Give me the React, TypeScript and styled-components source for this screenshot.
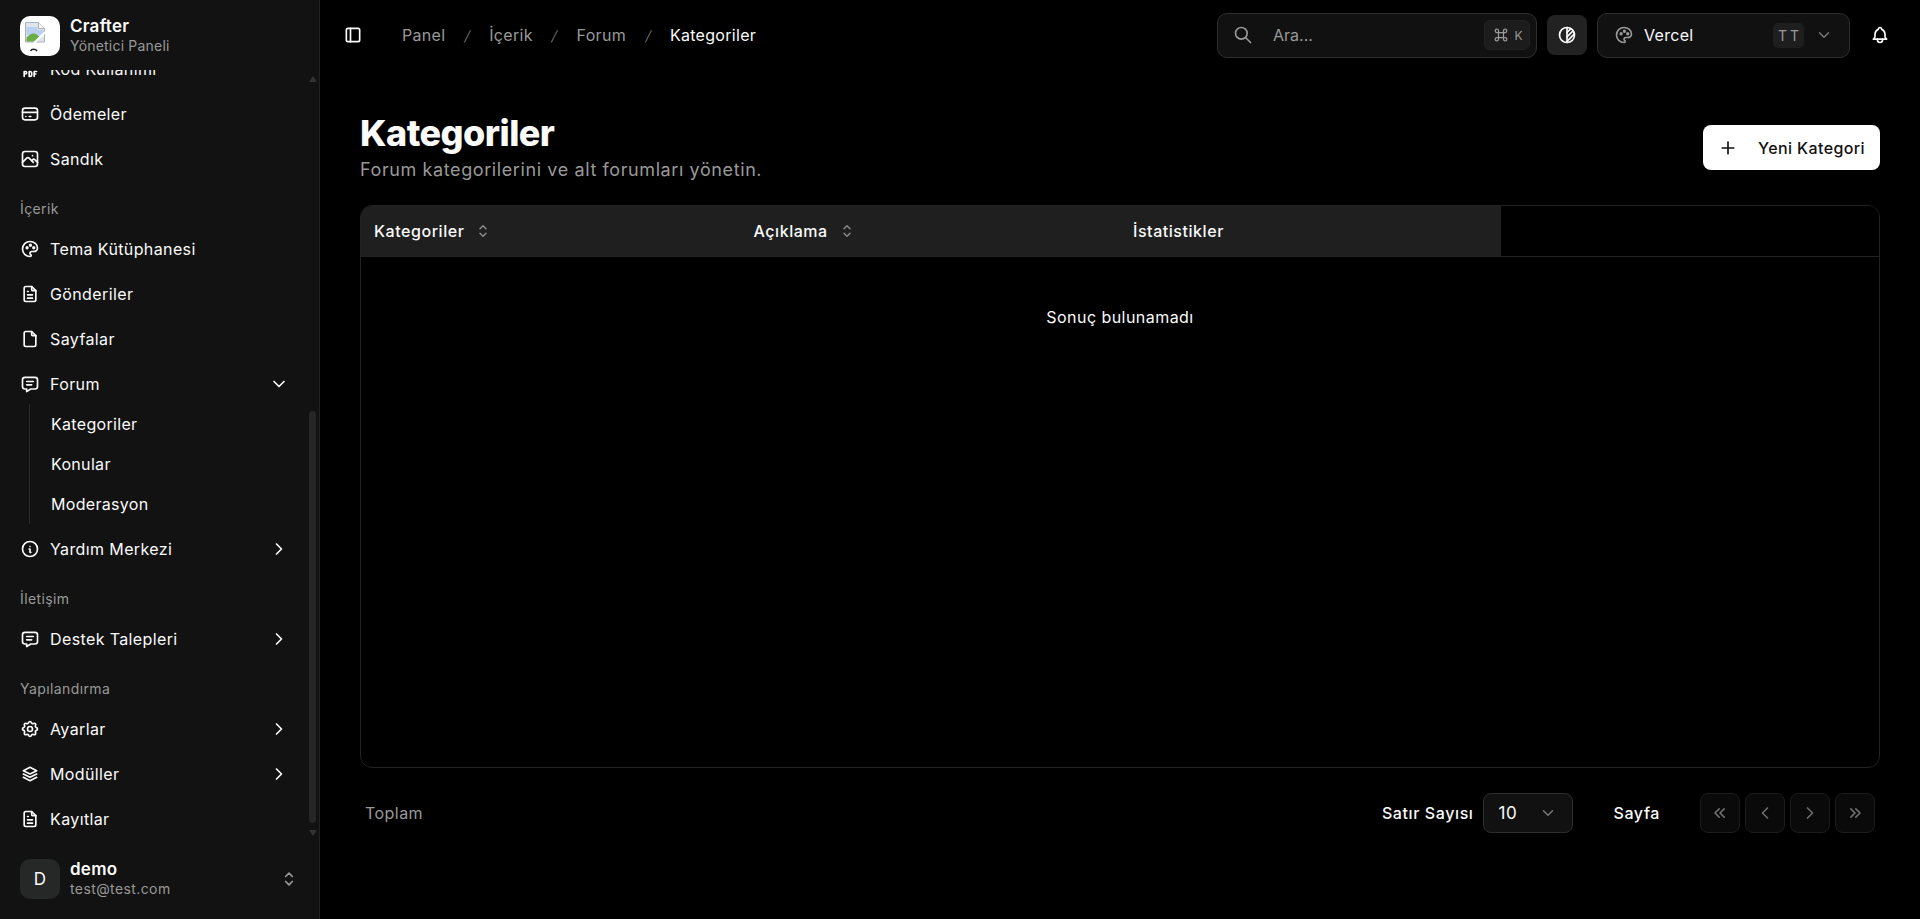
import React from "react";
import styled, { createGlobalStyle } from "styled-components";
import {
  TbBell, TbBrightness, TbChevronDown, TbChevronLeft, TbChevronRight, TbChevronsLeft, TbChevronsRight,
  TbCreditCard, TbFile, TbFileText, TbFileTypePdf, TbInfoCircle, TbCommand, TbLayoutSidebar, TbMessage,
  TbPalette, TbPhoto, TbPlus, TbSearch, TbSelector, TbSettings, TbStack2,
} from "react-icons/tb";

const Global = createGlobalStyle`
  html, body { margin: 0; padding: 0; height: 100%; background: #000; }
  body { font-family: Inter, "Noto Sans", sans-serif; color: #fafafa; font-size: 16px; overflow: hidden; }
  #root { height: 100%; }
  * { box-sizing: border-box; }
`;

const Shell = styled.div`display: flex; height: 919px; background: #000;`;

const Sidebar = styled.aside`
  position: relative; width: 320px; flex: none; display: flex; flex-direction: column;
  background: #121212; border-right: 1px solid #222;
`;
const Brand = styled.div`height: 70px; flex: none; padding: 16px 20px 0; display: flex; gap: 10px; align-items: flex-start;`;
const LogoBox = styled.div`
  width: 40px; height: 40px; border-radius: 10px; background: #fff; flex: none; display: flex; justify-content: center;
  align-items: flex-start; overflow: hidden;
`;
const TwoLine = styled.div`display: flex; flex-direction: column; min-width: 0;`;
const StrongLine = styled.span`font-size: 17px; font-weight: 600; line-height: 20px; letter-spacing: 0.25px;`;
const MutedLine = styled.span<{ $wide?: boolean }>`
  font-size: 14px; line-height: 20px; color: #999; letter-spacing: ${(p) => (p.$wide ? "0.4px" : "0.2px")};
`;

const NavScroll = styled.nav`
  flex: 1; min-height: 0; overflow: hidden; display: flex; flex-direction: column; justify-content: flex-end;
  padding: 0 20px 1.5px;
`;
const NavRow = styled.div`
  height: 45px; flex: none; display: flex; align-items: center; gap: 10px; font-size: 16px; color: #fafafa;
  letter-spacing: 0.38px;
  svg { flex: none; }
`;
const Grow = styled.span`flex: 1;`;
const RowChevron = styled.span`display: flex; margin-right: 10px; margin-left: auto;`;
const GroupLabel = styled.div`
  height: 35px; margin-top: 10px; padding-bottom: 2px; flex: none; display: flex; align-items: center; font-size: 14px; color: #999;
  letter-spacing: 0.4px;
`;
const SubList = styled.div`
  flex: none; margin: -2.5px 0 2.5px 9px; padding-left: 21px; border-left: 1px solid #2a2a2a; display: flex; flex-direction: column;
`;
const SubRow = styled.div`height: 40px; display: flex; align-items: center; font-size: 16px; letter-spacing: 0.32px;`;

const Thumb = styled.div`
  position: absolute; left: 309px; top: 411px; width: 7px; height: 412px; border-radius: 4px; background: #262626;
`;
const Arrow = styled.div<{ $down?: boolean }>`
  position: absolute; left: 309px; top: ${(p) => (p.$down ? "830px" : "76px")}; width: 0; height: 0;
  border-left: 4px solid transparent; border-right: 4px solid transparent;
  ${(p) => (p.$down ? "border-top: 6px solid #333;" : "border-bottom: 6px solid #333;")}
`;

const UserFoot = styled.div`
  height: 76px; flex: none; padding: 16px 20px 20px; display: flex; align-items: center; gap: 10px;
`;
const Avatar = styled.div`
  width: 40px; height: 40px; border-radius: 10px; background: #262828; display: flex; align-items: center;
  justify-content: center; font-size: 17px; flex: none;
`;
const UserIcon = styled.span`margin-left: auto; margin-right: 0; display: flex; color: #999;`;

const Main = styled.main`flex: 1; min-width: 0; display: flex; flex-direction: column;`;
const TopBar = styled.header`height: 70px; flex: none; display: flex; align-items: center; padding: 0 30px 0 23px;`;
const ToggleBtn = styled.span`display: flex; margin-right: 39px; color: #fafafa;`;
const Crumbs = styled.ol`display: flex; align-items: center; margin: 0; padding: 0; list-style: none; font-size: 16px; gap: 19.5px; color: #999;`;
const CrumbSep = styled.li`font-size: 14px; color: #888; transform: skewX(-14deg); font-weight: 300;`;
const Crumb = styled.li<{ $current?: boolean }>`color: ${(p) => (p.$current ? "#fafafa" : "#999")}; letter-spacing: 0.3px;`;
const TopRight = styled.div`margin-left: auto; display: flex; align-items: center;`;

const SearchBox = styled.div`
  width: 320px; height: 45px; border: 1px solid #2e2e2e; border-radius: 10px; background: #111; display: flex; align-items: center;
  padding: 0 6px 0 15px; gap: 20px; color: #999; font-size: 16px;
`;
const Kbd = styled.span`
  margin-left: auto; width: 46px; height: 30px; border-radius: 6px; background: #1c1c1c; border: 1px solid #222; display: flex;
  align-items: center; justify-content: center; gap: 3px; font-size: 12px; color: #999;
`;
const ThemeBtn = styled.button`
  width: 40px; height: 40px; margin: 0 10px; border: 0; border-radius: 8px; background: #222; color: #fafafa; display: flex;
  align-items: center; justify-content: center; padding: 0;
`;
const ThemeSelect = styled.div`
  width: 253px; height: 45px; border: 1px solid #2e2e2e; border-radius: 10px; background: #111; display: flex; align-items: center;
  padding: 0 16px 0 16px; gap: 10px; font-size: 16px; color: #fafafa; letter-spacing: 0.3px;
  > svg:first-child { color: #999; }
`;
const Badge = styled.span`
  margin-left: auto; width: 31px; height: 25px; border-radius: 5px; background: #1e1e1e; color: #999; display: flex; align-items: center;
  justify-content: center; font-size: 14px; letter-spacing: 3px; padding-left: 3px;
`;
const SelectChevron = styled.span`display: flex; color: #777; margin-left: 1px;`;
const BellWrap = styled.span`display: flex; margin-left: 20px; color: #fafafa;`;

const Content = styled.div`flex: 1; min-height: 0; display: flex; flex-direction: column; padding: 40px 40px 86px;`;
const PageHead = styled.div`flex: none; height: 75px; display: flex; justify-content: space-between; align-items: center;`;
const HeadText = styled.div`display: flex; flex-direction: column; align-self: flex-start;`;
const Title = styled.h1`margin: 0 0 2px; font-size: 36px; line-height: 46px; font-weight: 800; letter-spacing: -0.55px;`;
const Subtitle = styled.p`margin: 0; font-size: 18px; line-height: 24px; color: #999; letter-spacing: 0.6px;`;
const PrimaryBtn = styled.button`
  height: 45px; width: 177px; border: 0; border-radius: 8px; background: #fff; color: #111; display: flex; align-items: center;
  font: 500 16px Inter, sans-serif; padding: 0 0 0 15px; gap: 20px; letter-spacing: 0.4px;
`;

const TableCard = styled.div`
  flex: 1; min-height: 0; margin-top: 20px; border: 1px solid #222; border-radius: 12px; overflow: hidden; display: flex; flex-direction: column;
`;
const HeadRow = styled.div`
  flex: none; height: 51px; display: grid; grid-template-columns: 379.5px 379.5px 380.5px 1fr; border-bottom: 1px solid #222;
`;
const HeadCell = styled.div<{ $blank?: boolean }>`
  background: ${(p) => (p.$blank ? "#000" : "#1f1f1f")}; display: flex; align-items: center; gap: 10px; padding-left: 13px;
  font-size: 16px; font-weight: 500; letter-spacing: 0.55px;
  svg { color: #888; }
`;
const EmptyRow = styled.div`height: 120px; display: flex; align-items: center; justify-content: center; font-size: 16px; color: #fafafa; letter-spacing: 0.45px;`;

const TableFoot = styled.div`flex: none; height: 40px; margin-top: 25px; display: flex; align-items: center; padding: 0 5px;`;
const Total = styled.span`color: #999; font-size: 16px; letter-spacing: 0.45px;`;
const FootRight = styled.div`margin-left: auto; display: flex; align-items: center; font-size: 16px; font-weight: 500; letter-spacing: 0.6px;`;
const PageSize = styled.div`
  width: 90px; height: 40px; margin-left: 9px; border: 1px solid #2e2e2e; border-radius: 8px; background: #111; display: flex;
  align-items: center; justify-content: space-between; padding: 0 15px 0 15px; font-size: 17px; font-weight: 400;
  svg { color: #777; }
`;
const PageLabel = styled.span`margin: 0 40px 0 41px;`;
const PagerBtn = styled.span`
  width: 40px; height: 40px; border: 1px solid #1c1c1c; border-radius: 8px; background: #0a0a0a; color: #6e6e6e; display: flex;
  align-items: center; justify-content: center; & + & { margin-left: 5px; }
`;

const BrokenImage = () => (
  <svg width="40" height="40" viewBox="0 0 40 40" aria-hidden="true">
    <path d="M5.5 6.5h13l6 6v13.5h-19z" fill="#dfe5ec" stroke="#aab2ba" strokeWidth="1" />
    <path d="M18.5 6.500v6h6" fill="#f4f6f8" stroke="#aab2ba" strokeWidth="1" />
    <path d="M6.500 11h11v3h6v5h-17z" fill="#b9d0ee" />
    <path d="M6.500 25.500v-4c4-4 7-5 10-3l3 2-5 5z" fill="#68ad45" />
    <path d="M14 27L25.500 16" stroke="#fff" strokeWidth="2.2" />
    <path d="M10.500 35c1-2.200 5-2.200 6.500 0" fill="none" stroke="#222" strokeWidth="1.5" />
  </svg>
);

const Item = ({ icon: Icon, label, chevron }: { icon: React.ComponentType<{ size?: number }>; label: string; chevron?: "right" | "down" }) => (
  <NavRow>
    <Icon size={20} />
    <Grow>{label}</Grow>
    {chevron && <RowChevron>{chevron === "right" ? <TbChevronRight size={20} /> : <TbChevronDown size={20} />}</RowChevron>}
  </NavRow>
);

export default function App() {
  return (
    <Shell>
      <Global />
      <Sidebar>
        <Brand>
          <LogoBox><BrokenImage /></LogoBox>
          <TwoLine>
            <StrongLine>Crafter</StrongLine>
            <MutedLine>Yönetici Paneli</MutedLine>
          </TwoLine>
        </Brand>
        <NavScroll>
          <Item icon={TbFileTypePdf} label="Kod Kullanımı" />
          <Item icon={TbCreditCard} label="Ödemeler" />
          <Item icon={TbPhoto} label="Sandık" />
          <GroupLabel>İçerik</GroupLabel>
          <Item icon={TbPalette} label="Tema Kütüphanesi" />
          <Item icon={TbFileText} label="Gönderiler" />
          <Item icon={TbFile} label="Sayfalar" />
          <Item icon={TbMessage} label="Forum" chevron="down" />
          <SubList>
            <SubRow>Kategoriler</SubRow>
            <SubRow>Konular</SubRow>
            <SubRow>Moderasyon</SubRow>
          </SubList>
          <Item icon={TbInfoCircle} label="Yardım Merkezi" chevron="right" />
          <GroupLabel>İletişim</GroupLabel>
          <Item icon={TbMessage} label="Destek Talepleri" chevron="right" />
          <GroupLabel>Yapılandırma</GroupLabel>
          <Item icon={TbSettings} label="Ayarlar" chevron="right" />
          <Item icon={TbStack2} label="Modüller" chevron="right" />
          <Item icon={TbFileText} label="Kayıtlar" />
        </NavScroll>
        <Arrow />
        <Thumb />
        <Arrow $down />
        <UserFoot>
          <Avatar>D</Avatar>
          <TwoLine>
            <StrongLine>demo</StrongLine>
            <MutedLine $wide>test@test.com</MutedLine>
          </TwoLine>
          <UserIcon><TbSelector size={20} /></UserIcon>
        </UserFoot>
      </Sidebar>
      <Main>
        <TopBar>
          <ToggleBtn><TbLayoutSidebar size={20} /></ToggleBtn>
          <Crumbs>
            <Crumb>Panel</Crumb>
            <CrumbSep>/</CrumbSep>
            <Crumb>İçerik</Crumb>
            <CrumbSep>/</CrumbSep>
            <Crumb>Forum</Crumb>
            <CrumbSep>/</CrumbSep>
            <Crumb $current>Kategoriler</Crumb>
          </Crumbs>
          <TopRight>
            <SearchBox>
              <TbSearch size={20} />
              <span>Ara...</span>
              <Kbd><TbCommand size={20} strokeWidth={1.5} />K</Kbd>
            </SearchBox>
            <ThemeBtn aria-label="Tema"><TbBrightness size={20} /></ThemeBtn>
            <ThemeSelect>
              <TbPalette size={20} />
              <span>Vercel</span>
              <Badge>TT</Badge>
              <SelectChevron><TbChevronDown size={18} /></SelectChevron>
            </ThemeSelect>
            <BellWrap><TbBell size={20} /></BellWrap>
          </TopRight>
        </TopBar>
        <Content>
          <PageHead>
            <HeadText>
              <Title>Kategoriler</Title>
              <Subtitle>Forum kategorilerini ve alt forumları yönetin.</Subtitle>
            </HeadText>
            <PrimaryBtn><TbPlus size={20} />Yeni Kategori</PrimaryBtn>
          </PageHead>
          <TableCard>
            <HeadRow>
              <HeadCell>Kategoriler<TbSelector size={18} /></HeadCell>
              <HeadCell>Açıklama<TbSelector size={18} /></HeadCell>
              <HeadCell>İstatistikler</HeadCell>
              <HeadCell $blank />
            </HeadRow>
            <EmptyRow>Sonuç bulunamadı</EmptyRow>
          </TableCard>
          <TableFoot>
            <Total>Toplam</Total>
            <FootRight>
              <span>Satır Sayısı</span>
              <PageSize>10<TbChevronDown size={18} /></PageSize>
              <PageLabel>Sayfa</PageLabel>
              <PagerBtn><TbChevronsLeft size={20} /></PagerBtn>
              <PagerBtn><TbChevronLeft size={20} /></PagerBtn>
              <PagerBtn><TbChevronRight size={20} /></PagerBtn>
              <PagerBtn><TbChevronsRight size={20} /></PagerBtn>
            </FootRight>
          </TableFoot>
        </Content>
      </Main>
    </Shell>
  );
}
